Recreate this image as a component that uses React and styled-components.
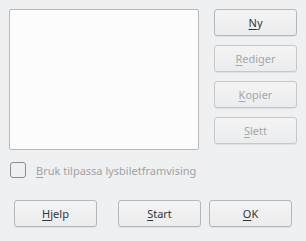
import React from 'react'
import styled, { createGlobalStyle } from 'styled-components'

const Global = createGlobalStyle`
  html, body {
    margin: 0;
    padding: 0;
    background: #eff0f1;
  }
  body {
    font-family: "Noto Sans", "Open Sans", sans-serif;
    font-size: 11px;
    color: #31363b;
  }
`

export default function App() {
    return (
        <Dialog>
            <Global />
            <Top>
                <ListBox />
                <Side>
                    <Button><u>N</u>y</Button>
                    <Button disabled><u>R</u>ediger</Button>
                    <Button disabled><u>K</u>opier</Button>
                    <Button disabled><u>S</u>lett</Button>
                </Side>
            </Top>
            <CheckRow>
                <Box />
                <Label><u>B</u>ruk tilpassa lysbiletframvising</Label>
            </CheckRow>
            <Bottom>
                <Button><u>H</u>jelp</Button>
                <Spacer />
                <Button><u>S</u>tart</Button>
                <Button><u>O</u>K</Button>
            </Bottom>
        </Dialog>
    )
}

const Dialog = styled.div`
    width: 306px;
    height: 241px;
    box-sizing: border-box;
    padding: 9px 9px 0 9px;
    display: flex;
    flex-direction: column;
`
const Top = styled.div`
    display: flex;
    gap: 15px;
`
const ListBox = styled.div`
    width: 190px;
    height: 141px;
    box-sizing: border-box;
    background: #fcfcfc;
    border: 1px solid #b8b9ba;
    border-radius: 2px;
`
const Side = styled.div`
    display: flex;
    flex-direction: column;
    gap: 9px;
`
const Button = styled.button`
    width: 83px;
    height: 27px;
    box-sizing: border-box;
    padding: 0;
    font: inherit;
    font-size: 11px;
    color: ${p => (p.disabled ? '#a5a7a9' : '#31363b')};
    background: linear-gradient(#f4f4f5, #ebeced);
    border: 1px solid ${p => (p.disabled ? '#c6c7c8' : '#b6b7b8')};
    border-radius: 3px;
    box-shadow: 0 1px 0 rgba(0, 0, 0, 0.06);
    u {
        text-underline-offset: 2px;
    }
`
const CheckRow = styled.div`
    display: flex;
    align-items: center;
    gap: 10px;
    margin-top: 12px;
    padding-left: 1px;
`
const Box = styled.div`
    width: 16px;
    height: 16px;
    box-sizing: border-box;
    border: 1px solid #8a8d90;
    border-radius: 3px;
    background: #eff0f1;
`
const Label = styled.span`
    color: #a0a2a5;
    u {
        text-underline-offset: 2px;
    }
`
const Bottom = styled.div`
    display: flex;
    margin-top: 22px;
    padding-left: 5px;
    padding-right: 5px;
    gap: 8px;
`
const Spacer = styled.div`
    width: 5px;
`
